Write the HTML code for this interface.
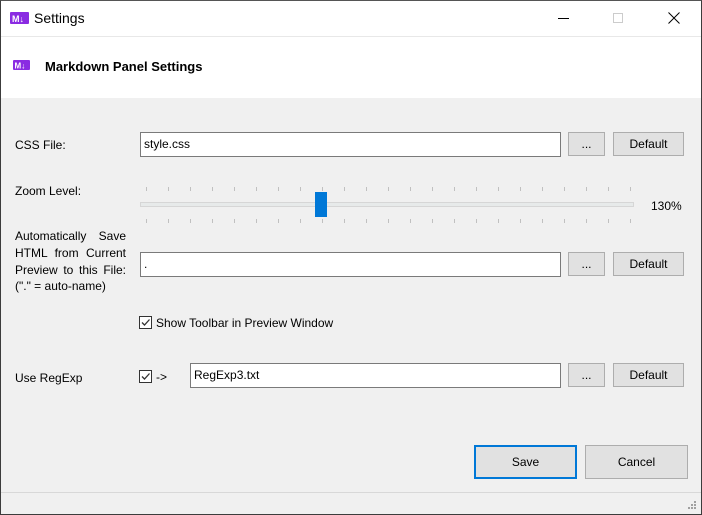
<!DOCTYPE html>
<html><head><style>
*{margin:0;padding:0;box-sizing:border-box}
body{width:702px;height:515px;background:#f0f0f0;font-family:"Liberation Sans",sans-serif;font-size:12px;color:#000;position:relative;overflow:hidden}
.a{position:absolute}
.win{left:0;top:0;width:702px;height:515px;border:1px solid #3c3c3c;border-top-color:#555}
.inp{background:#fff;border:1px solid #7a7a7a;height:25px;padding:4px 3px;font-size:12px}
.btn{background:#e1e1e1;border:1px solid #adadad;text-align:center;font-size:12px;height:24px;line-height:22px}
.lbl{font-size:12px;color:#000}
.cb{width:13px;height:13px;border:1px solid #333;background:#fff}
.tick{width:1px;height:4px;background:#c0c0c0}
</style></head><body>
<div class="a" style="left:0;top:0;width:702px;height:36px;background:#fff"></div>
<div class="a" style="left:0;top:36px;width:702px;height:1px;background:#e8e8e8"></div>
<div class="a" style="left:0;top:37px;width:702px;height:61px;background:#fff"></div>
<svg class="a" style="left:10px;top:12px" width="19" height="12"><rect width="19" height="12" rx="1" fill="#8a2be2"/><text x="2" y="10" font-size="9" font-weight="bold" fill="#fff" font-family="Liberation Sans">M↓</text></svg>
<div class="a" style="left:34px;top:10px;font-size:14px">Settings</div>
<div class="a" style="left:558px;top:18px;width:11px;height:1px;background:#000"></div>
<div class="a" style="left:613px;top:13px;width:10px;height:10px;border:1px solid #ccc"></div>
<svg class="a" style="left:668px;top:12px" width="12" height="12"><path d="M0.5 0.5L11.5 11.5M11.5 0.5L0.5 11.5" stroke="#000" stroke-width="1"/></svg>
<svg class="a" style="left:13px;top:60px" width="17" height="10"><rect width="17" height="10" rx="1" fill="#8a2be2"/><text x="1.5" y="8.5" font-size="8" font-weight="bold" fill="#fff" font-family="Liberation Sans">M↓</text></svg>
<div class="a" style="left:45px;top:59px;font-size:13px;font-weight:bold">Markdown Panel Settings</div>

<div class="a lbl" style="left:15px;top:138px">CSS File:</div>
<div class="a inp" style="left:140px;top:132px;width:421px">style.css</div>
<div class="a btn" style="left:568px;top:132px;width:37px">...</div>
<div class="a btn" style="left:613px;top:132px;width:71px">Default</div>

<div class="a lbl" style="left:15px;top:184px">Zoom Level:</div>
<div class="a" style="left:140px;top:202px;width:494px;height:5px;background:#e7eaea;border:1px solid #d6d6d6"></div>
<div class="a" style="left:315px;top:192px;width:12px;height:25px;background:#0078d7"></div>
<div class="a lbl" style="left:651px;top:199px">130%</div>
<div id="ticks"></div>

<div class="a lbl" style="left:15px;top:228px;width:111px;line-height:17px;text-align:justify;text-align-last:justify">Automatically Save HTML from Current Preview to this File:</div>
<div class="a lbl" style="left:15px;top:279px">("." = auto-name)</div>
<div class="a inp" style="left:140px;top:252px;width:421px">.</div>
<div class="a btn" style="left:568px;top:252px;width:37px">...</div>
<div class="a btn" style="left:613px;top:252px;width:71px">Default</div>

<div class="a cb" style="left:139px;top:316px"></div>
<svg class="a" style="left:139px;top:316px" width="13" height="13"><path d="M3 6.5L5.5 9L10.5 3.5" stroke="#333" stroke-width="1.3" fill="none"/></svg>
<div class="a lbl" style="left:156px;top:316px">Show Toolbar in Preview Window</div>

<div class="a lbl" style="left:15px;top:371px">Use RegExp</div>
<div class="a cb" style="left:139px;top:370px"></div>
<svg class="a" style="left:139px;top:370px" width="13" height="13"><path d="M3 6.5L5.5 9L10.5 3.5" stroke="#333" stroke-width="1.3" fill="none"/></svg>
<div class="a lbl" style="left:156px;top:370px">-&gt;</div>
<div class="a inp" style="left:190px;top:363px;width:371px">RegExp3.txt</div>
<div class="a btn" style="left:568px;top:363px;width:37px">...</div>
<div class="a btn" style="left:613px;top:363px;width:71px">Default</div>

<div class="a btn" style="left:474px;top:445px;width:103px;height:34px;line-height:30px;border:2px solid #0078d7">Save</div>
<div class="a btn" style="left:585px;top:445px;width:103px;height:34px;line-height:32px">Cancel</div>
<div class="a" style="left:0;top:492px;width:702px;height:1px;background:#d8d8d8"></div>
<svg class="a" style="left:688px;top:501px" width="10" height="10" fill="#a0a0a0"><rect x="6" y="0" width="2" height="2"/><rect x="3" y="3" width="2" height="2"/><rect x="6" y="3" width="2" height="2"/><rect x="0" y="6" width="2" height="2"/><rect x="3" y="6" width="2" height="2"/><rect x="6" y="6" width="2" height="2"/></svg>
<div class="a win"></div>
<script>
var h='';for(var i=0;i<23;i++){var x=146+i*22;h+='<div class="a tick" style="left:'+x+'px;top:187px"></div><div class="a tick" style="left:'+x+'px;top:219px"></div>';}
document.getElementById('ticks').innerHTML=h;
</script>
</body></html>
